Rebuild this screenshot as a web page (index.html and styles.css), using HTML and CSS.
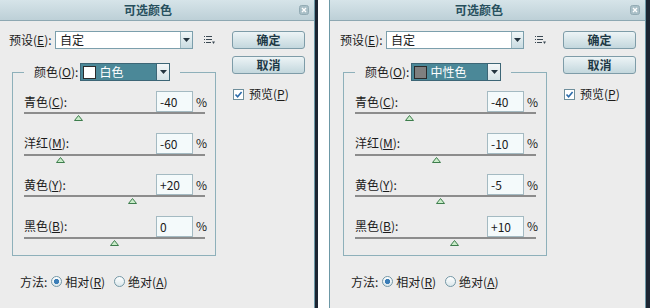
FILE: index.html
```html
<!DOCTYPE html>
<html lang="zh-CN">
<head>
    <meta charset="UTF-8">
    <title>可选颜色</title>
    <link rel="stylesheet" href="styles.css">
</head>
<body>
<div class="screen">

    <!-- dialog 1: 白色 -->
    <div class="dialog dialog-first">
        <div class="titlebar">
            <span class="title">可选颜色</span>
            <svg class="close" width="10" height="10" viewBox="0 0 10 10"><rect x="0.5" y="0.5" width="9" height="9" rx="2" fill="#a9bfc7" stroke="#93abb4"/><path d="M3 3 L7 7 M7 3 L3 7" stroke="#fff" stroke-width="1.4"/></svg>
        </div>
        <div class="dialog-body">
            <div class="main">
                <div class="preset-row">
                    <span class="label">预设(<u>E</u>):</span>
                    <div class="preset-select">
                        <span class="select-text">自定</span>
                        <span class="arrow-box"><svg width="7" height="4" viewBox="0 0 7 4"><path d="M0 0 H7 L3.5 4 Z" fill="#24343f"/></svg></span>
                    </div>
                    <svg class="menu-icon" width="11" height="8" viewBox="0 0 11 8"><g fill="#3a4852"><rect x="0" y="0" width="1" height="1"/><rect x="2" y="0" width="6" height="1"/><rect x="0" y="3" width="1" height="1"/><rect x="2" y="3" width="6" height="1"/><rect x="0" y="6" width="1" height="1"/><rect x="2" y="6" width="5" height="1"/><path d="M8 5.5 H11 L9.5 8 Z"/></g></svg>
                </div>

                <fieldset class="group">
                    <legend class="group-legend">
                        <span class="legend-inner">
                            <span class="label">颜色(<u>O</u>):</span>
                            <span class="color-select">
                                <span class="color-value"><span class="swatch swatch-white"></span>白色</span>
                                <span class="arrow-box"><svg width="7" height="4" viewBox="0 0 7 4"><path d="M0 0 H7 L3.5 4 Z" fill="#24343f"/></svg></span>
                            </span>
                        </span>
                    </legend>

                    <div class="adjust">
                        <div class="adjust-head"><span class="label">青色(<u>C</u>):</span><span class="value-box">-40</span><span class="pct">%</span></div>
                        <div class="slider"><svg class="thumb" style="left: 50px" width="9" height="6" viewBox="0 0 9 6"><polygon points="4.5,0.5 8.5,5.5 0.5,5.5" fill="#c9ecc9" stroke="#3d7d4c"/></svg></div>
                    </div>
                    <div class="adjust">
                        <div class="adjust-head"><span class="label">洋红(<u>M</u>):</span><span class="value-box">-60</span><span class="pct">%</span></div>
                        <div class="slider"><svg class="thumb" style="left: 32px" width="9" height="6" viewBox="0 0 9 6"><polygon points="4.5,0.5 8.5,5.5 0.5,5.5" fill="#c9ecc9" stroke="#3d7d4c"/></svg></div>
                    </div>
                    <div class="adjust">
                        <div class="adjust-head"><span class="label">黄色(<u>Y</u>):</span><span class="value-box">+20</span><span class="pct">%</span></div>
                        <div class="slider"><svg class="thumb" style="left: 104px" width="9" height="6" viewBox="0 0 9 6"><polygon points="4.5,0.5 8.5,5.5 0.5,5.5" fill="#c9ecc9" stroke="#3d7d4c"/></svg></div>
                    </div>
                    <div class="adjust">
                        <div class="adjust-head"><span class="label">黑色(<u>B</u>):</span><span class="value-box">0</span><span class="pct">%</span></div>
                        <div class="slider"><svg class="thumb" style="left: 86px" width="9" height="6" viewBox="0 0 9 6"><polygon points="4.5,0.5 8.5,5.5 0.5,5.5" fill="#c9ecc9" stroke="#3d7d4c"/></svg></div>
                    </div>
                </fieldset>

                <div class="method-row">
                    <span class="label">方法:</span>
                    <span class="radio radio-on"></span><span class="radio-text">相对(<u>R</u>)</span>
                    <span class="radio"></span><span class="radio-text">绝对(<u>A</u>)</span>
                </div>
            </div>

            <div class="side">
                <button class="btn">确定</button>
                <button class="btn">取消</button>
                <div class="check-row">
                    <svg class="checkbox" width="11" height="11" viewBox="0 0 11 11"><rect x="0.5" y="0.5" width="10" height="10" fill="#fff" stroke="#6e8e9b"/><path d="M2.5 5.5 L4.6 7.8 L8.6 3" fill="none" stroke="#2b6aa9" stroke-width="1.6"/></svg>
                    <span>预览(<u>P</u>)</span>
                </div>
            </div>
        </div>
    </div>

    <!-- dialog 2: 中性色 -->
    <div class="dialog dialog-second">
        <div class="titlebar">
            <span class="title">可选颜色</span>
            <svg class="close" width="10" height="10" viewBox="0 0 10 10"><rect x="0.5" y="0.5" width="9" height="9" rx="2" fill="#a9bfc7" stroke="#93abb4"/><path d="M3 3 L7 7 M7 3 L3 7" stroke="#fff" stroke-width="1.4"/></svg>
        </div>
        <div class="dialog-body">
            <div class="main">
                <div class="preset-row">
                    <span class="label">预设(<u>E</u>):</span>
                    <div class="preset-select">
                        <span class="select-text">自定</span>
                        <span class="arrow-box"><svg width="7" height="4" viewBox="0 0 7 4"><path d="M0 0 H7 L3.5 4 Z" fill="#24343f"/></svg></span>
                    </div>
                    <svg class="menu-icon" width="11" height="8" viewBox="0 0 11 8"><g fill="#3a4852"><rect x="0" y="0" width="1" height="1"/><rect x="2" y="0" width="6" height="1"/><rect x="0" y="3" width="1" height="1"/><rect x="2" y="3" width="6" height="1"/><rect x="0" y="6" width="1" height="1"/><rect x="2" y="6" width="5" height="1"/><path d="M8 5.5 H11 L9.5 8 Z"/></g></svg>
                </div>

                <fieldset class="group">
                    <legend class="group-legend">
                        <span class="legend-inner">
                            <span class="label">颜色(<u>O</u>):</span>
                            <span class="color-select">
                                <span class="color-value"><span class="swatch swatch-grey"></span>中性色</span>
                                <span class="arrow-box"><svg width="7" height="4" viewBox="0 0 7 4"><path d="M0 0 H7 L3.5 4 Z" fill="#24343f"/></svg></span>
                            </span>
                        </span>
                    </legend>

                    <div class="adjust">
                        <div class="adjust-head"><span class="label">青色(<u>C</u>):</span><span class="value-box">-40</span><span class="pct">%</span></div>
                        <div class="slider"><svg class="thumb" style="left: 50px" width="9" height="6" viewBox="0 0 9 6"><polygon points="4.5,0.5 8.5,5.5 0.5,5.5" fill="#c9ecc9" stroke="#3d7d4c"/></svg></div>
                    </div>
                    <div class="adjust">
                        <div class="adjust-head"><span class="label">洋红(<u>M</u>):</span><span class="value-box">-10</span><span class="pct">%</span></div>
                        <div class="slider"><svg class="thumb" style="left: 77px" width="9" height="6" viewBox="0 0 9 6"><polygon points="4.5,0.5 8.5,5.5 0.5,5.5" fill="#c9ecc9" stroke="#3d7d4c"/></svg></div>
                    </div>
                    <div class="adjust">
                        <div class="adjust-head"><span class="label">黄色(<u>Y</u>):</span><span class="value-box">-5</span><span class="pct">%</span></div>
                        <div class="slider"><svg class="thumb" style="left: 81px" width="9" height="6" viewBox="0 0 9 6"><polygon points="4.5,0.5 8.5,5.5 0.5,5.5" fill="#c9ecc9" stroke="#3d7d4c"/></svg></div>
                    </div>
                    <div class="adjust">
                        <div class="adjust-head"><span class="label">黑色(<u>B</u>):</span><span class="value-box">+10</span><span class="pct">%</span></div>
                        <div class="slider"><svg class="thumb" style="left: 95px" width="9" height="6" viewBox="0 0 9 6"><polygon points="4.5,0.5 8.5,5.5 0.5,5.5" fill="#c9ecc9" stroke="#3d7d4c"/></svg></div>
                    </div>
                </fieldset>

                <div class="method-row">
                    <span class="label">方法:</span>
                    <span class="radio radio-on"></span><span class="radio-text">相对(<u>R</u>)</span>
                    <span class="radio"></span><span class="radio-text">绝对(<u>A</u>)</span>
                </div>
            </div>

            <div class="side">
                <button class="btn">确定</button>
                <button class="btn">取消</button>
                <div class="check-row">
                    <svg class="checkbox" width="11" height="11" viewBox="0 0 11 11"><rect x="0.5" y="0.5" width="10" height="10" fill="#fff" stroke="#6e8e9b"/><path d="M2.5 5.5 L4.6 7.8 L8.6 3" fill="none" stroke="#2b6aa9" stroke-width="1.6"/></svg>
                    <span>预览(<u>P</u>)</span>
                </div>
            </div>
        </div>
    </div>

</div>
</body>
</html>
```

FILE: styles.css
```css
body {
    margin: 0;
    background-color: #ffffff;
    font-family: "Noto Sans CJK SC", "Liberation Sans", sans-serif;
    font-size: 12px;
    line-height: 14px;
    color: #1b1b1b;
    overflow: hidden;
}
u {
    text-decoration: underline;
    text-underline-offset: 1px;
}
.screen {
    display: flex;
    align-items: flex-start;
    height: 308px;
    overflow: hidden;
}

/* Dialog frame */
.dialog {
    width: 317px;
    height: 320px;
    box-sizing: border-box;
    flex-shrink: 0;
    background-color: #ececec;
    border-left: 1px solid #6d98a6;
    border-right: 1px solid #6d98a6;
    box-shadow: 3px 0 0 #1c2532;
}
.dialog-first {
    margin-left: -2px;
}
.dialog-second {
    margin-left: 14px;
    box-shadow: 5px 0 0 #1c2532;
}

.titlebar {
    display: flex;
    align-items: center;
    height: 20px;
    border-bottom: 1px solid #8ea8b2;
    background: linear-gradient(#d6e4e9, #bdd0d7);
}
.title {
    flex: 1;
    padding-left: 2px;
    text-align: center;
    font-weight: bold;
    color: #27505e;
}
.close {
    margin: 0 5px 0 4px;
}

.dialog-body {
    display: flex;
    padding: 10px 0 0 10px;
}
.main {
    width: 207px;
}
.side {
    width: 73px;
    margin-left: 16px;
    display: flex;
    flex-direction: column;
}

/* Preset row */
.preset-row {
    display: flex;
    align-items: center;
    height: 18px;
}
.preset-select {
    display: flex;
    width: 138px;
    height: 18px;
    box-sizing: border-box;
    margin-left: auto;
    border: 1px solid #7c9fac;
    background-color: #ffffff;
}
.select-text {
    flex: 1;
    padding-left: 4px;
    line-height: 16px;
}
.arrow-box {
    display: flex;
    align-items: center;
    justify-content: center;
    width: 11px;
    border-left: 1px solid #9db6be;
    background: linear-gradient(#f1f7f8, #c9dbe1);
}
.menu-icon {
    margin: 0 1px 0 11px;
}

/* Group box */
.group {
    width: 204px;
    box-sizing: border-box;
    margin: 14px 0 0 3px;
    padding: 0 10px 9px 11px;
    border: 1px solid #8eb0ba;
    min-width: 0;
}
.group-legend {
    padding: 0 10px;
}
.legend-inner {
    display: flex;
    align-items: center;
    height: 18px;
}
.color-select {
    display: flex;
    width: 90px;
    height: 18px;
    box-sizing: border-box;
    margin-left: 2px;
    border: 1px solid #3d6676;
}
.color-value {
    flex: 1;
    display: flex;
    align-items: center;
    background-color: #4b8898;
    color: #ffffff;
    line-height: 16px;
}
.swatch {
    width: 11px;
    height: 11px;
    margin: 0 3px 0 2px;
    border: 1px solid #2b2b2b;
}
.swatch-white {
    background-color: #ffffff;
}
.swatch-grey {
    background-color: #7f7f7f;
}
.color-select .arrow-box {
    width: 12px;
    border-left: 1px solid #3d6676;
    background: linear-gradient(#f3f7f8, #d5e2e6);
}

/* Adjustment rows */
.adjust {
    margin-top: 11.67px;
}
.adjust:first-of-type {
    margin-top: 10px;
}
.adjust-head {
    display: flex;
    align-items: center;
    height: 21px;
}
.value-box {
    width: 37px;
    height: 21px;
    box-sizing: border-box;
    margin-left: auto;
    padding-left: 3px;
    border: 1px solid #a4bac2;
    background-color: #f4fafb;
    line-height: 19px;
}
.pct {
    width: 9px;
    margin-left: 3px;
}
.slider {
    position: relative;
    height: 9px;
    border-top: 2px solid #8c8c8c;
    box-sizing: border-box;
}
.thumb {
    position: absolute;
    top: 1px;
}

/* Method row */
.method-row {
    display: flex;
    align-items: center;
    height: 14px;
    margin-top: 19px;
    padding-left: 11px;
}
.radio {
    width: 11px;
    height: 11px;
    box-sizing: border-box;
    margin-left: 4px;
    border: 1px solid #7397a6;
    border-radius: 50%;
    background: linear-gradient(#ffffff, #dbe7eb);
}
.method-row .radio + .radio-text + .radio {
    margin-left: 9px;
}
.radio-on {
    background: radial-gradient(circle, #3b7db7 0 2.4px, transparent 2.9px), linear-gradient(#ffffff, #dbe7eb);
}
.radio-text {
    margin-left: 3px;
}

/* Buttons and preview */
.btn {
    height: 18px;
    padding: 0;
    border: 1px solid #7e9ca8;
    border-radius: 3px;
    background: linear-gradient(#edf4f6, #c3d7dd);
    font-family: inherit;
    font-size: 12px;
    font-weight: bold;
    line-height: 16px;
    color: #1e3946;
}
.btn + .btn {
    margin-top: 7px;
}
.check-row {
    display: flex;
    align-items: center;
    margin-top: 13px;
    padding-left: 1px;
}
.checkbox {
    margin-right: 5px;
}
```
